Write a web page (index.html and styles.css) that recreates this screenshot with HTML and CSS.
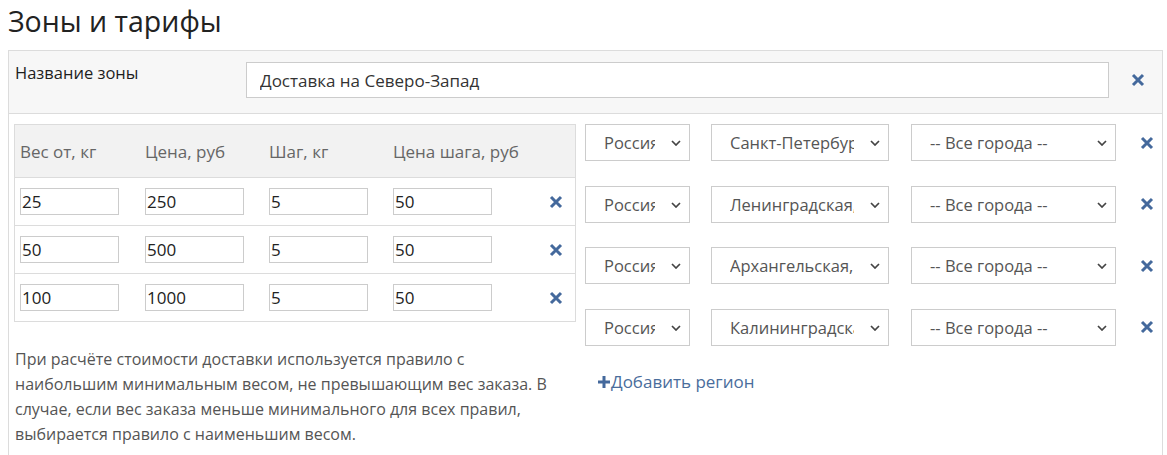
FILE: index.html
```html
<!DOCTYPE html>
<html lang="ru">
<head>
<meta charset="utf-8">
<title>Зоны и тарифы</title>
<link rel="stylesheet" href="styles.css">
</head>
<body>
<div class="page">
  <h1 class="title">Зоны и тарифы</h1>
  <div class="panel">
    <div class="panel-head">
      <label class="zone-label">Название зоны</label>
      <input class="zone-input" type="text" value="Доставка на Северо-Запад">
      <span class="del del-head"><svg viewBox="0 0 14 14" width="14" height="14"><path d="M2 2 L12 12 M12 2 L2 12"/></svg></span>
    </div>
    <div class="panel-body">
      <div class="left">
        <div class="rates">
          <div class="rates-row rates-head">
            <div class="cell">Вес от, кг</div>
            <div class="cell">Цена, руб</div>
            <div class="cell">Шаг, кг</div>
            <div class="cell">Цена шага, руб</div>
            <div class="cell"></div>
          </div>
          <div class="rates-row">
            <div class="cell"><input class="num" type="text" value="25"></div>
            <div class="cell"><input class="num" type="text" value="250"></div>
            <div class="cell"><input class="num" type="text" value="5"></div>
            <div class="cell"><input class="num" type="text" value="50"></div>
            <div class="cell cell-del"><span class="del"><svg viewBox="0 0 14 14" width="14" height="14"><path d="M2 2 L12 12 M12 2 L2 12"/></svg></span></div>
          </div>
          <div class="rates-row">
            <div class="cell"><input class="num" type="text" value="50"></div>
            <div class="cell"><input class="num" type="text" value="500"></div>
            <div class="cell"><input class="num" type="text" value="5"></div>
            <div class="cell"><input class="num" type="text" value="50"></div>
            <div class="cell cell-del"><span class="del"><svg viewBox="0 0 14 14" width="14" height="14"><path d="M2 2 L12 12 M12 2 L2 12"/></svg></span></div>
          </div>
          <div class="rates-row">
            <div class="cell"><input class="num" type="text" value="100"></div>
            <div class="cell"><input class="num" type="text" value="1000"></div>
            <div class="cell"><input class="num" type="text" value="5"></div>
            <div class="cell"><input class="num" type="text" value="50"></div>
            <div class="cell cell-del"><span class="del"><svg viewBox="0 0 14 14" width="14" height="14"><path d="M2 2 L12 12 M12 2 L2 12"/></svg></span></div>
          </div>
        </div>
        <p class="help">При расчёте стоимости доставки используется правило с наибольшим минимальным весом, не превышающим вес заказа. В случае, если вес заказа меньше минимального для всех правил, выбирается правило с наименьшим весом.</p>
      </div>
      <div class="right">
        <div class="region">
          <div class="sel sel-country"><span class="sel-text">Россия</span><svg class="chev" viewBox="0 0 10 6" width="10" height="6"><path d="M1 1 L5 5 L9 1"/></svg></div>
          <div class="sel sel-region"><span class="sel-text">Санкт-Петербург</span><svg class="chev" viewBox="0 0 10 6" width="10" height="6"><path d="M1 1 L5 5 L9 1"/></svg></div>
          <div class="sel sel-city"><span class="sel-text">-- Все города --</span><svg class="chev" viewBox="0 0 10 6" width="10" height="6"><path d="M1 1 L5 5 L9 1"/></svg></div>
          <span class="del"><svg viewBox="0 0 14 14" width="14" height="14"><path d="M2 2 L12 12 M12 2 L2 12"/></svg></span>
        </div>
        <div class="region">
          <div class="sel sel-country"><span class="sel-text">Россия</span><svg class="chev" viewBox="0 0 10 6" width="10" height="6"><path d="M1 1 L5 5 L9 1"/></svg></div>
          <div class="sel sel-region"><span class="sel-text">Ленинградская, обл</span><svg class="chev" viewBox="0 0 10 6" width="10" height="6"><path d="M1 1 L5 5 L9 1"/></svg></div>
          <div class="sel sel-city"><span class="sel-text">-- Все города --</span><svg class="chev" viewBox="0 0 10 6" width="10" height="6"><path d="M1 1 L5 5 L9 1"/></svg></div>
          <span class="del"><svg viewBox="0 0 14 14" width="14" height="14"><path d="M2 2 L12 12 M12 2 L2 12"/></svg></span>
        </div>
        <div class="region">
          <div class="sel sel-country"><span class="sel-text">Россия</span><svg class="chev" viewBox="0 0 10 6" width="10" height="6"><path d="M1 1 L5 5 L9 1"/></svg></div>
          <div class="sel sel-region"><span class="sel-text">Архангельская, обл</span><svg class="chev" viewBox="0 0 10 6" width="10" height="6"><path d="M1 1 L5 5 L9 1"/></svg></div>
          <div class="sel sel-city"><span class="sel-text">-- Все города --</span><svg class="chev" viewBox="0 0 10 6" width="10" height="6"><path d="M1 1 L5 5 L9 1"/></svg></div>
          <span class="del"><svg viewBox="0 0 14 14" width="14" height="14"><path d="M2 2 L12 12 M12 2 L2 12"/></svg></span>
        </div>
        <div class="region">
          <div class="sel sel-country"><span class="sel-text">Россия</span><svg class="chev" viewBox="0 0 10 6" width="10" height="6"><path d="M1 1 L5 5 L9 1"/></svg></div>
          <div class="sel sel-region"><span class="sel-text">Калининградская, обл</span><svg class="chev" viewBox="0 0 10 6" width="10" height="6"><path d="M1 1 L5 5 L9 1"/></svg></div>
          <div class="sel sel-city"><span class="sel-text">-- Все города --</span><svg class="chev" viewBox="0 0 10 6" width="10" height="6"><path d="M1 1 L5 5 L9 1"/></svg></div>
          <span class="del"><svg viewBox="0 0 14 14" width="14" height="14"><path d="M2 2 L12 12 M12 2 L2 12"/></svg></span>
        </div>
        <a class="add" href="#"><svg viewBox="0 0 14 14" width="14" height="14"><path d="M7 1 V13 M1 7 H13"/></svg>Добавить регион</a>
      </div>
    </div>
  </div>
</div>
</body>
</html>
```

FILE: styles.css
```css
* { box-sizing: border-box; }
body {
  margin: 0;
  background: #fff;
  font-family: "Open Sans", Lato, "Liberation Sans", sans-serif;
  color: #222;
}
.page { padding: 0 0 0 8px; }
.title {
  margin: 0 0 8px 0;
  padding-top: 1px;
  font-size: 28.5px;
  font-weight: normal;
  line-height: 41px;
  color: #222;
}
.panel {
  width: 1155px;
  border: 1px solid #dcdcdc;
  border-bottom: none;
  height: 410px;
}
.panel-head {
  display: flex;
  align-items: flex-start;
  background: #f7f7f7;
  border-bottom: 1px solid #dcdcdc;
  padding: 11px 0 15px 6px;
}
.zone-label {
  width: 231px;
  font-size: 16.5px;
  line-height: 22px;
  color: #1e1e1e;
}
.zone-input {
  width: 863px;
  height: 36px;
  border: 1px solid #ccc;
  background: #fff;
  padding: 0 13px;
  font-family: inherit;
  font-size: 17px;
  color: #333;
  outline: none;
}
.del {
  display: inline-flex;
  align-items: center;
  justify-content: center;
  width: 14px;
  height: 14px;
}
.del svg path {
  stroke: #44699c;
  stroke-width: 3;
  fill: none;
}
.del-head { margin: 11px 0 0 22px; }
.panel-body {
  display: flex;
  align-items: flex-start;
  padding: 10px 0 0 5px;
}
.left { width: 562px; }
.rates { border: 1px solid #dcdcdc; }
.rates-row {
  display: grid;
  grid-template-columns: 125px 124px 124px 124px 1fr;
  height: 48px;
  align-items: center;
  border-top: 1px solid #dcdcdc;
}
.rates-head {
  border-top: none;
  height: 52px;
  background: #f2f2f2;
  color: #666;
  font-size: 17px;
}
.cell { padding: 0 5px; white-space: nowrap; }
.cell-del {
  display: flex;
  justify-content: flex-end;
  padding-right: 12px;
}
.num {
  width: 99px;
  height: 27px;
  border: 1px solid #ccc;
  padding: 0 1px;
  font-family: inherit;
  font-size: 17px;
  color: #222;
  background: #fff;
  outline: none;
}
.help {
  width: 552px;
  margin: 25px 0 0 1px;
  font-size: 16px;
  line-height: 25px;
  color: #555;
}
.right { margin-left: 9px; }
.region {
  display: flex;
  align-items: center;
  height: 37px;
  margin-bottom: 24.5px;
}
.sel {
  position: relative;
  height: 37px;
  border: 1px solid #ccc;
  background: #fff;
  display: flex;
  align-items: center;
  padding: 0 34px 0 18px;
  font-size: 16.5px;
  color: #555;
  overflow: hidden;
}
.sel-text { white-space: nowrap; overflow: hidden; }
.sel-country { width: 105px; }
.sel-region { width: 178px; margin-left: 21px; }
.sel-city { width: 205px; margin-left: 22px; }
.chev {
  position: absolute;
  right: 8px;
  top: 15px;
}
.chev path { stroke: #444; stroke-width: 1.7; fill: none; }
.region .del { margin-left: 24px; }
.add {
  display: inline-flex;
  align-items: center;
  margin: 0 0 0 12px;
  font-size: 17px;
  color: #4a6d9c;
  text-decoration: none;
}
.add svg path { stroke: #44699c; stroke-width: 3; fill: none; }
```
